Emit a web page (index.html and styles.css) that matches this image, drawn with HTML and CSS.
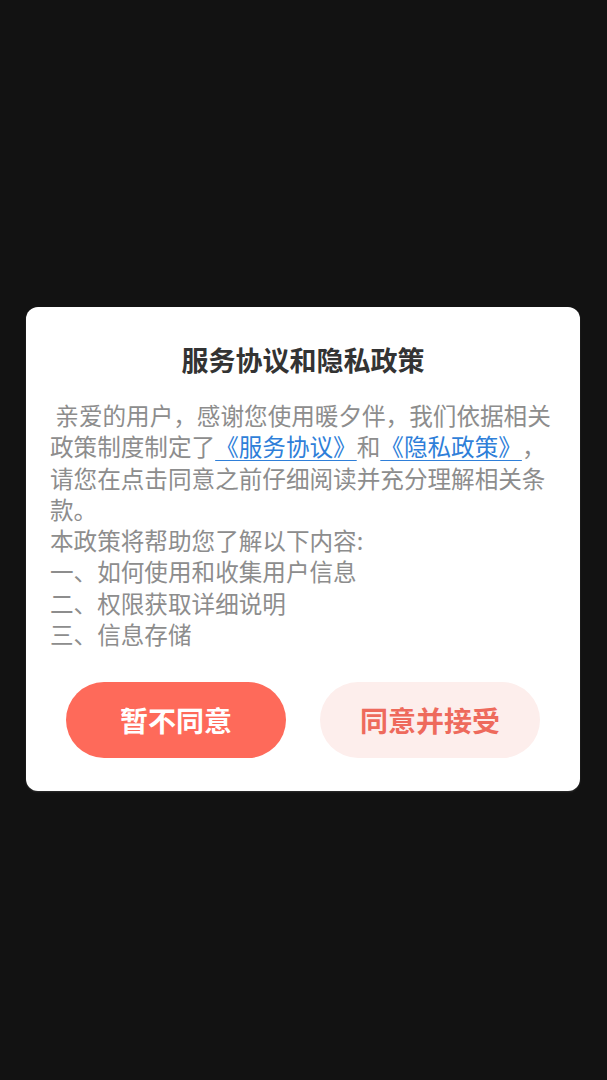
FILE: index.html
```html
<!DOCTYPE html>
<html lang="zh-CN">
<head>
<meta charset="utf-8">
<title>服务协议和隐私政策</title>
<link rel="stylesheet" href="styles.css">
</head>
<body>
<div class="screen">
  <div class="dialog">
    <h1 class="title">服务协议和隐私政策</h1>
    <div class="content">
      <p class="para">&nbsp;亲爱的用户，感谢您使用暖夕伴，我们依据相关政策制度制定了<a class="link" href="#">《服务协议》</a>和<a class="link" href="#">《隐私政策》</a>，请您在点击同意之前仔细阅读并充分理解相关条款。</p>
      <p class="para">本政策将帮助您了解以下内容:</p>
      <p class="para">一、如何使用和收集用户信息</p>
      <p class="para">二、权限获取详细说明</p>
      <p class="para">三、信息存储</p>
    </div>
    <div class="actions">
      <button class="btn btn-reject" type="button">暂不同意</button>
      <button class="btn btn-accept" type="button">同意并接受</button>
    </div>
  </div>
</div>
</body>
</html>
```

FILE: styles.css
```css
html, body {
  margin: 0;
  padding: 0;
  background: #121212;
}

body {
  font-family: "Noto Sans CJK SC", "Noto Sans", sans-serif;
}

.screen {
  width: 607px;
  height: 1080px;
  box-sizing: border-box;
  padding-top: 307px;
  padding-left: 26px;
}

.dialog {
  width: 554px;
  box-sizing: border-box;
  background: #ffffff;
  border-radius: 12px;
  padding: 34px 24px 33px 24px;
  box-shadow: 0 1px 2px rgba(255, 255, 255, 0.12);
}

.title {
  margin: 0;
  font-size: 27px;
  line-height: 38px;
  font-weight: 700;
  color: #333333;
  text-align: center;
}

.content {
  margin-top: 21px;
  font-size: 23.6px;
  line-height: 31.3px;
  color: #8d8d8d;
  text-spacing-trim: space-all;
}

.para {
  margin: 0;
}

.link {
  color: #2f7fd9;
  text-decoration: underline;
  text-decoration-thickness: 1px;
  text-underline-offset: 4px;
}

.actions {
  margin-top: 32px;
  display: flex;
  justify-content: center;
  gap: 34px;
}

.btn {
  width: 220px;
  height: 76px;
  border: none;
  border-radius: 38px;
  font-family: "Noto Sans CJK SC", "Noto Sans", sans-serif;
  font-size: 28px;
  font-weight: 700;
  padding: 0;
  cursor: pointer;
}

.btn-reject {
  background: #fe6a5a;
  color: #ffffff;
}

.btn-accept {
  background: #fdeeec;
  color: #ee6a5c;
}
```
